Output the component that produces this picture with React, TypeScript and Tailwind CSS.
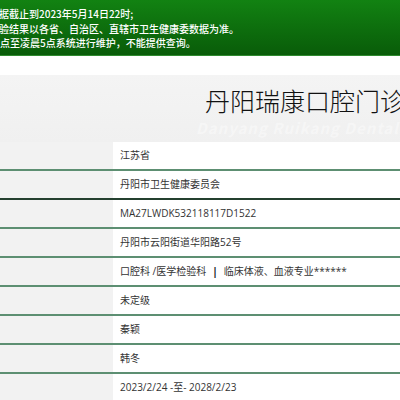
import React from "react";

const rows: React.ReactNode[] = [
  "江苏省",
  "丹阳市卫生健康委员会",
  "MA27LWDK532118117D1522",
  "丹阳市云阳街道华阳路52号",
  <>
    口腔科 /医学检验科<span className="font-bold text-[#111] mx-[6px]">|</span>临床体液、血液专业******
  </>,
  "未定级",
  "秦颖",
  "韩冬",
  "2023/2/24 -至- 2028/2/23",
];

export default function App() {
  return (
    <div
      className="w-[400px] h-[400px] overflow-hidden bg-white"
      style={{ fontFamily: '"Noto Sans CJK SC", "Noto Sans", sans-serif' }}
    >
      <div className="h-[56px] bg-gradient-to-b from-[#128212] to-[#095c09] border-b border-[#2f8a2f] pt-[7px] text-white text-[10px] leading-[14.5px] font-medium overflow-hidden whitespace-nowrap">
        <div className="ml-[-11px]">数据截止到2023年5月14日22时;</div>
        <div className="ml-[-1px]">验结果以各省、自治区、直辖市卫生健康委数据为准。</div>
        <div className="ml-[0px]">点至凌晨5点系统进行维护，不能提供查询。</div>
      </div>
      <div className="h-[19px] bg-white" />
      <div className="h-[67px] bg-gradient-to-b from-[#f4f4f4] to-[#f0f0f0] relative overflow-hidden">
        <div className="absolute left-[205px] top-[9px] text-[25px] leading-[32px] font-light text-[#111] whitespace-nowrap">
          丹阳瑞康口腔门诊部
        </div>
        <div className="absolute left-[196px] top-[42px] text-[15px] italic font-bold text-white/40 whitespace-nowrap tracking-[1px]">
          Danyang Ruikang Dental Clinic
        </div>
      </div>
      <div>
        {rows.map((r, i) => (
          <div
            key={i}
            className={`flex h-[29px] border-b-2 ${i === 1 ? "border-[#24402f]" : "border-[#5d8f72]"}`}
          >
            <div className="w-[113px] bg-[#f2f2f2]" />
            <div
              className="flex-1 bg-white flex items-center pl-[7px] text-[10px] text-[#333] whitespace-nowrap"
              style={{ fontFamily: '"Open Sans", "Noto Sans CJK SC", sans-serif' }}
            >
              {r}
            </div>
          </div>
        ))}
      </div>
    </div>
  );
}
